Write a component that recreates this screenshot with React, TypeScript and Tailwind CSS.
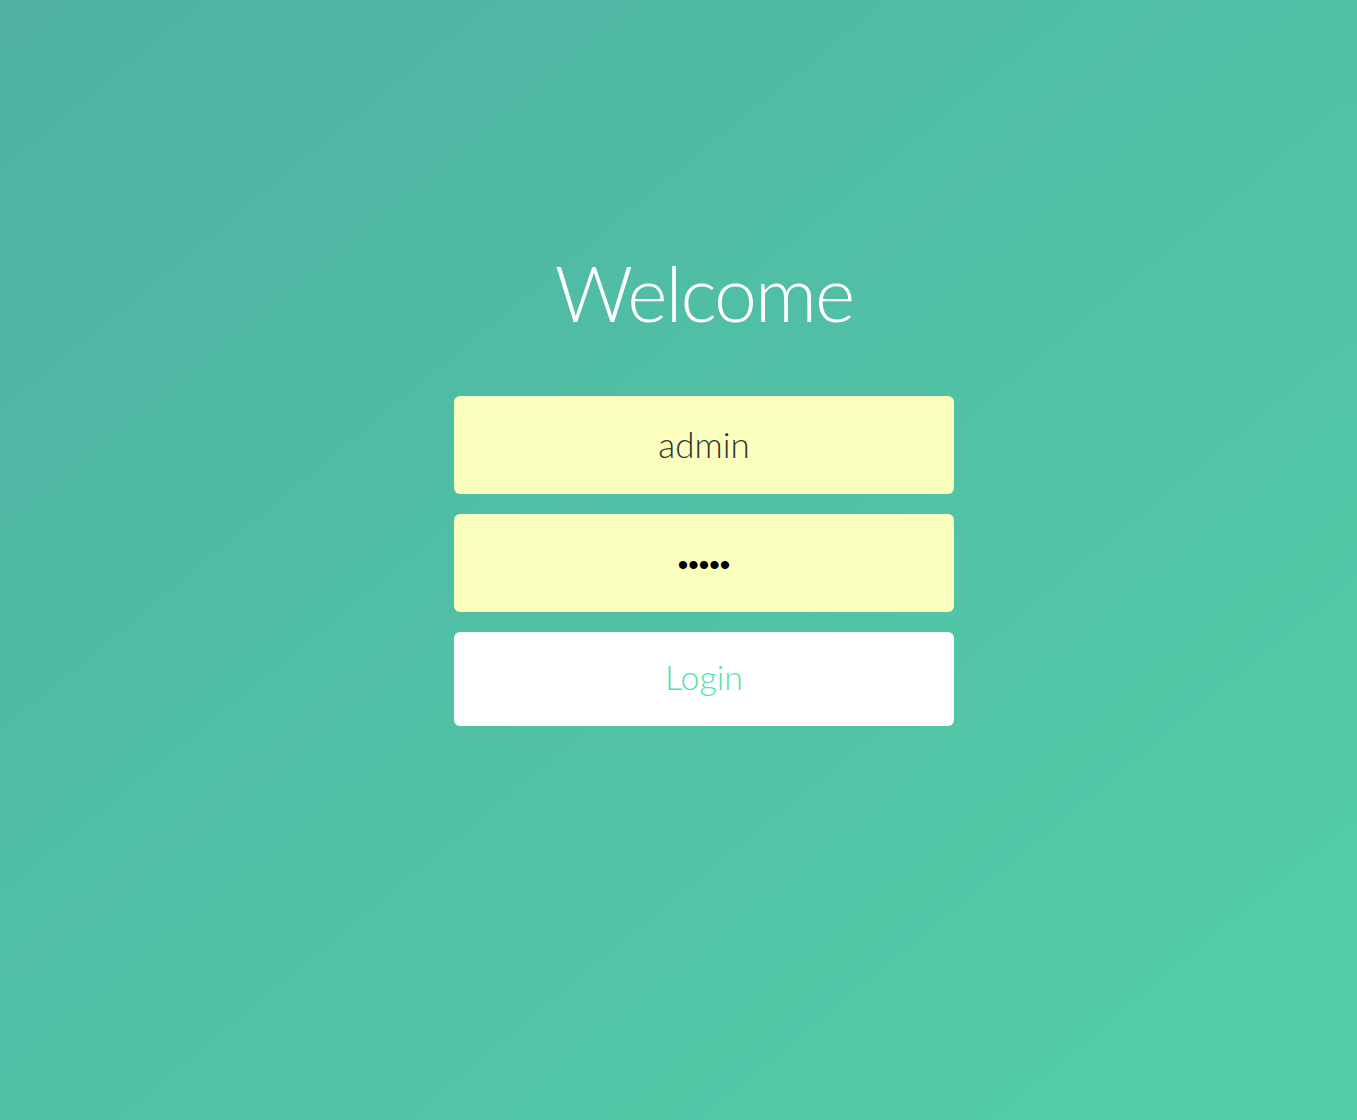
export default function App() {
  return (
    <div
      className="min-h-screen w-full bg-linear-to-br from-[#4fb2a3] to-[#53cfa8] flex flex-col items-center pl-[51px]"
      style={{ fontFamily: "Lato, 'Open Sans', sans-serif" }}
    >
      <h1 className="mt-[244px] text-[77px] leading-[96px] font-light text-white tracking-[-2px]">
        Welcome
      </h1>
      <form className="mt-[56px] flex flex-col gap-5 w-[500px]" onSubmit={(e) => e.preventDefault()}>
        <input
          type="text"
          defaultValue="admin"
          className="h-[98px] w-full rounded-[6px] bg-[#faffbd] pb-[3px] text-center text-[35px] font-light text-[#333] outline-none"
        />
        <input
          type="password"
          defaultValue="admin"
          className="h-[98px] w-full rounded-[6px] bg-[#faffbd] pt-[4px] text-center text-[30px] text-black outline-none"
          style={{ fontFamily: "'Liberation Sans', sans-serif" }}
        />
        <button
          type="submit"
          className="h-[94px] w-full rounded-[6px] bg-white pb-[5px] text-[34px] font-light text-[#53e3a6]"
        >
          Login
        </button>
      </form>
    </div>
  );
}
